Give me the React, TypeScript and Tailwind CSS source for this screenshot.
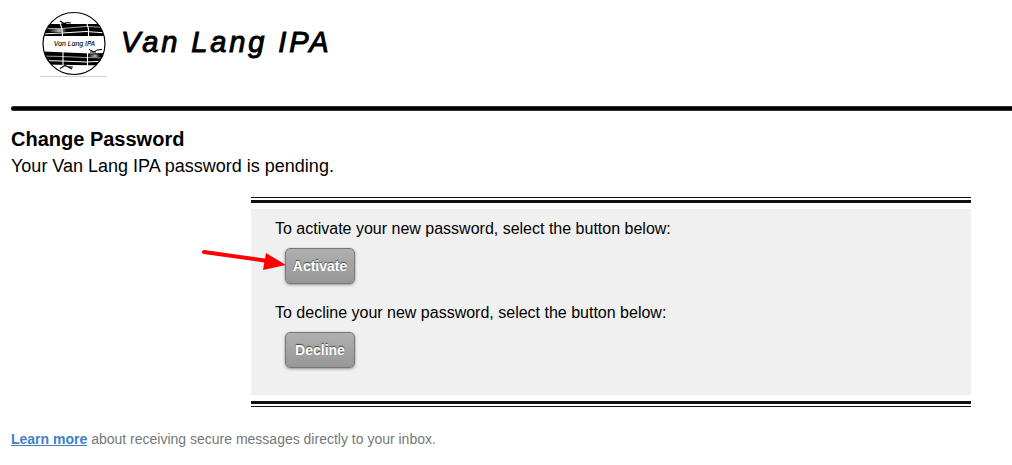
import type { ReactNode } from "react";

function Logo() {
  return (
    <svg viewBox="0 0 67 68" className="h-[68px] w-[67px] shrink-0" role="img" aria-label="Van Lang IPA logo">
      <defs>
        <clipPath id="logo-circle">
          <circle cx="34" cy="34.5" r="31" />
        </clipPath>
        <linearGradient id="shine" x1="0" x2="1" y1="0" y2="0">
          <stop offset="0" stopColor="#fff" stopOpacity="0" />
          <stop offset="0.6" stopColor="#fff" stopOpacity="0.7" />
          <stop offset="1" stopColor="#fff" stopOpacity="0" />
        </linearGradient>
      </defs>
      <circle cx="34" cy="34.5" r="31" fill="#fff" />
      <g clipPath="url(#logo-circle)">
        {/* upper stalks */}
        <path d="M0 15H67V27H0Z" fill="#000" />
        <path d="M0 19.5L22 19.5L46 17.5L67 18.5" stroke="#ccc" strokeWidth="0.8" fill="none" />
        <path d="M0 25L22 24L46 22.5L67 24" stroke="#fff" strokeWidth="1" fill="none" />
        <path d="M20 14L22 20L22.5 28M47 15L48.5 20L48.5 28" stroke="#fff" strokeWidth="1.1" fill="none" />
        <path d="M8 20H27V23H8Z" fill="url(#shine)" />
        {/* lower stalks */}
        <path d="M0 42.500L50 44.500L67 44V56.500L0 55.500Z" fill="#000" />
        <path d="M0 47L22 47.500L46 48.500L67 49" stroke="#ccc" strokeWidth="0.8" fill="none" />
        <path d="M0 51.500L22 52L46 53L67 52" stroke="#fff" strokeWidth="1" fill="none" />
        <path d="M23 42V57M47.500 44V57" stroke="#fff" strokeWidth="1.1" />
        <path d="M48 45.500H60V48H48Z" fill="url(#shine)" />
      </g>
      <circle cx="34" cy="34.5" r="31" fill="none" stroke="#000" strokeWidth="1.2" />
      {/* leaves */}
      <path d="M20 12L24 14.5L27 13.5L31 14M21 15L26 15" fill="none" stroke="#000" strokeWidth="1.2" />
      <path d="M49 40.5L54 43L57 41L62 40.5M50 43L56 43" fill="none" stroke="#000" strokeWidth="1" />
      <path d="M20 59.5L25 56.5L32 60M26 57.5L33 58" fill="none" stroke="#000" strokeWidth="1.2" />
      <text x="34.5" y="37" textAnchor="middle" fontSize="6.5" fontWeight="500" fontStyle="italic" fontFamily="Inter, sans-serif">
        Van Lang IPA
      </text>
      <path d="M0 67.5H67" stroke="#d4d4d4" />
    </svg>
  );
}

function DoubleRule({ flipped = false }: { flipped?: boolean }) {
  return (
    <div className={flipped ? "flex flex-col-reverse gap-0.5" : "flex flex-col gap-0.5"}>
      <div className="h-px bg-[#101014]" />
      <div className="h-[3px] bg-[#101014]" />
    </div>
  );
}

function Arrow() {
  return (
    <svg viewBox="0 0 84 24" className="pointer-events-none absolute top-0 -left-[83px] h-6 w-[84px]" aria-hidden="true">
      <path d="M2 4L66 13" stroke="#f00" strokeWidth="4" strokeLinecap="round" />
      <path d="M64 5L84 17L61 22Z" fill="#f00" />
    </svg>
  );
}

function Action({ text, label, children }: { text: string; label: string; children?: ReactNode }) {
  return (
    <div className="flex flex-col items-start gap-[7px]">
      <p className="text-base leading-6">{text}</p>
      <div className="relative ml-2.5">
        <button
          type="button"
          className="h-9 w-[70px] rounded-[5px] border border-[#777] bg-linear-to-b from-[#b0b0b0] to-[#979797] text-sm font-bold text-white shadow-[0_1px_3px_rgba(0,0,0,0.4)] [text-shadow:0_-1px_1px_rgba(0,0,0,0.6)]"
        >
          {label}
        </button>
        {children}
      </div>
    </div>
  );
}

export default function App() {
  return (
    <div className="overflow-hidden bg-white pl-[11px] font-['Liberation_Sans',Arial,sans-serif] text-black">
      <header className="flex items-center gap-3.5 pt-[9px] pl-[29px]">
        <Logo />
        <span className="pb-0.5 text-[29px] leading-9 tracking-widest italic [-webkit-text-stroke:1px_#000]">Van Lang IPA</span>
      </header>
      <div className="mt-[29px] h-[5px] rounded-l-full border-y border-[#333] bg-black" />

      <main>
        <h1 className="mt-3.5 text-xl leading-7 font-bold">Change Password</h1>
        <p className="mt-px text-lg leading-6">Your Van Lang IPA password is pending.</p>

        <section className="mt-[19px] mr-[41px] ml-60">
          <DoubleRule />
          <div className="my-1.5 flex flex-col gap-[17px] bg-[#f0f0f0] px-6 pt-2 pb-[27px]">
            <Action text="To activate your new password, select the button below:" label="Activate">
              <Arrow />
            </Action>
            <Action text="To decline your new password, select the button below:" label="Decline" />
          </div>
          <DoubleRule flipped />
        </section>
      </main>

      <footer className="mt-[22px] pb-4 text-sm leading-5 text-[#777]">
        <a href="#learn-more" className="font-bold text-[#3f7fc6] underline">
          Learn more
        </a>{" "}
        about receiving secure messages directly to your inbox.
      </footer>
    </div>
  );
}
